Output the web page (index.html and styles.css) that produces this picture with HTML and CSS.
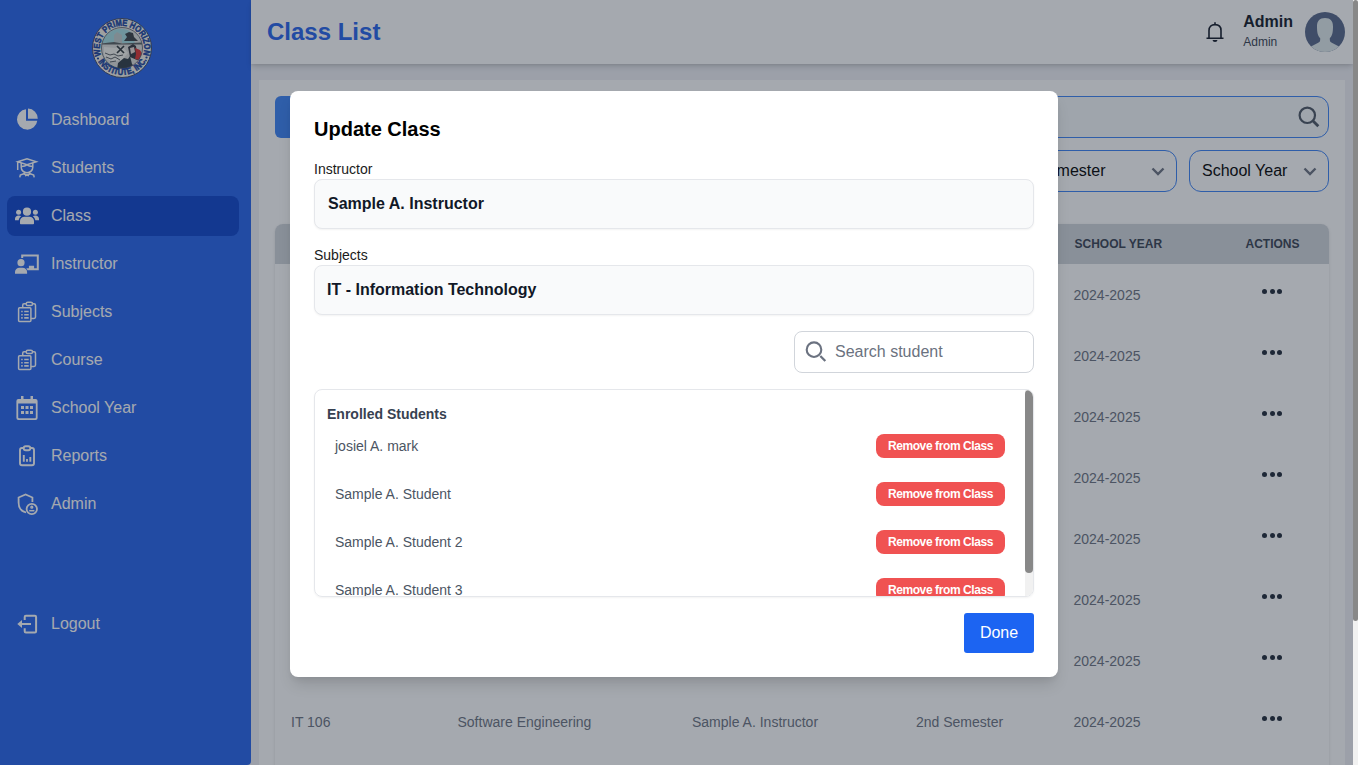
FILE: index.html
```html
<!DOCTYPE html>
<html lang="en">
<head>
<meta charset="utf-8">
<title>Class List</title>
<link rel="stylesheet" href="styles.css">
</head>
<body>
<div class="window">
<div class="app">
  <aside class="sidebar">
    <svg class="logo" viewBox="0 0 60 60">
      <defs>
        <path id="arc-top" d="M9.600 38.500A22.100 22.100 0 1 1 50.400 38.500"/>
        <path id="arc-bottom" d="M3.200 37.500A28.200 28.200 0 0 0 56.800 37.500"/>
        <clipPath id="seal"><circle cx="30" cy="30" r="20.500"/></clipPath>
      </defs>
      <circle cx="30" cy="30" r="29.500" fill="#f3f1e7" stroke="#404a68"/>
      <g clip-path="url(#seal)">
        <rect width="60" height="60" fill="#dededb"/>
        <path d="M8 25C15 12 29 7 39 14L43 25Z" fill="#a6dce2"/>
        <path d="M32 23l3-4-2-3 4-2 4 1 1 4 4 4z" fill="#393f43"/>
        <path d="M22 17l3-3 5 3v8h-8z" fill="#c0cccb"/>
        <path d="M9 25.500l13-1.500 8 1.500 20-1v2H9z" fill="#596062"/>
        <path d="M12 29l11 1 8-1 5 6-6 7-10 2-8-6z" fill="#f4f3ef"/>
        <path d="M13 35l5 2 4-1 4 2 5-1M14 39l5 2 4-2 5 3M18 44l6-1" stroke="#555b60" fill="none"/>
        <path d="M25 28l7 7M32 28l-7 7" stroke="#30383c" stroke-width="1.700"/>
        <path d="M36 29l5-3 3 2 1 8 5 5-5 1-7-3z" fill="#34363e"/>
        <path d="M43 30l5 2 3 5-3 5-5-1 1-5z" fill="#df302f"/>
        <path d="M38 30l4-1 1 5-4 2z" fill="#ead9d2"/>
        <path d="M26 45l6-5 4 1 2-3 2 8 6 6H25z" fill="#303b45"/>
      </g>
      <circle cx="30" cy="30" r="20.500" fill="none" stroke="#505866" stroke-width=".8"/>
      <circle cx="6" cy="40.500" r="1.100" fill="#163f9c"/><circle cx="54.500" cy="39.500" r="1.100" fill="#163f9c"/>
      <text class="seal-text"><textPath href="#arc-top" textLength="84" lengthAdjust="spacingAndGlyphs" startOffset="1">WEST PRIME HORIZON</textPath></text>
      <text class="seal-text"><textPath href="#arc-bottom" startOffset="6.500" textLength="59" lengthAdjust="spacingAndGlyphs">INSTITUTE, INC.</textPath></text>
    </svg>
    <nav class="nav">
      <a class="nav-item"><svg viewBox="0 0 24 24" fill="currentColor"><path d="M11 1.300V12.800h11.300A10.200 10.200 0 1 1 11 1.300Z"/><path d="M13 .600a10 10 0 0 1 9.800 10.200H13Z"/></svg>Dashboard</a>
      <a class="nav-item"><svg viewBox="0 0 24 24" fill="none" stroke="currentColor" stroke-width="1.500"><path d="M2.700 5.800 12 2.700l9.300 3.100L12 8.800ZM2.700 6v8M6.200 7.500v3.700c0 3 2.600 5.600 5.800 5.600s5.800-2.600 5.800-5.600V7.500M6.500 10.500C9 10.200 10.500 9.800 12 8.800c1.500 1 3 1.400 5.500 1.700M9.500 16.200v1.300l-4.200 1.600-.5 2.200M14.500 16.200v1.300l4.200 1.600.5 2.200M9 18l5 1.800M15 18l-5 1.800"/></svg>Students</a>
      <a class="nav-item active"><svg viewBox="0 0 24 24" fill="currentColor"><circle cx="12" cy="7.700" r="4.100"/><circle cx="3.600" cy="8.300" r="2.500"/><circle cx="20.400" cy="8.300" r="2.500"/><path d="M5 19.500v-2.400c0-2.600 2-4.300 4.500-4.300h5c2.500 0 4.500 1.700 4.500 4.300v2.400q0 .8-.8.8H5.800Q5 20.300 5 19.500ZM0 16.300v-1.500c0-1.900 1.600-3.300 3.600-3.300 1 0 1.900.2 2.600.8-1.300.9-2.300 2.100-2.500 4H0ZM24 16.300v-1.500c0-1.900-1.600-3.300-3.600-3.300-1 0-1.900.2-2.600.8 1.300.9 2.300 2.100 2.500 4H24Z"/></svg>Class</a>
      <a class="nav-item"><svg viewBox="0 0 24 24" fill="currentColor"><path d="M6.200 6V2.400h17.600v15.800H12.500l-1.200-2h2.600v-2.400h5.200v2.400h2.700V4.400H8.200V6Z"/><circle cx="6" cy="10.700" r="3.600"/><path d="M0 21.800v-1.700c0-2.700 2-4.400 4.500-4.400h3c2.600 0 4.600 1.700 4.600 4.400v1.700Z"/></svg>Instructor</a>
      <a class="nav-item"><svg viewBox="0 0 24 24" fill="none" stroke="currentColor" stroke-width="1.500"><rect x="3.600" y="7.800" width="12.300" height="13.700" rx="1"/><path d="M7.700 7.500V5.200q0-1.400 1.400-1.400h2.200M17.400 3.800H19q1.500 0 1.500 1.500v11.800q0 1.400-1.500 1.400h-3"/><rect x="11.200" y="2.200" width="6.300" height="3.300" rx="1.600"/><path d="M6.200 11.500h1.500m1.500 0h4.500M6.200 14.700h1.500m1.500 0h4.500M6.200 17.900h1.500m1.500 0h4.500" stroke-width="1.600"/></svg>Subjects</a>
      <a class="nav-item"><svg viewBox="0 0 24 24" fill="none" stroke="currentColor" stroke-width="1.500"><rect x="3.600" y="7.800" width="12.300" height="13.700" rx="1"/><path d="M7.700 7.500V5.200q0-1.400 1.400-1.400h2.200M17.400 3.800H19q1.500 0 1.500 1.500v11.800q0 1.400-1.500 1.400h-3"/><rect x="11.200" y="2.200" width="6.300" height="3.300" rx="1.600"/><path d="M6.200 11.500h1.500m1.500 0h4.500M6.200 14.700h1.500m1.500 0h4.500M6.200 17.900h1.500m1.500 0h4.500" stroke-width="1.600"/></svg>Course</a>
      <a class="nav-item"><svg viewBox="0 0 24 24"><path fill="currentColor" fill-rule="evenodd" d="M6 0h2.500v3h7V0H18v3h2.500Q22.600 3 22.600 5v17q0 2-2 2H3.400q-2 0-2-2V5q0-2 2-2H6ZM3.200 7.500v14q0 .8.800.8h16q.8 0 .8-.8v-14ZM6 10h3v3H6Zm4.500 0h3v3h-3Zm4.500 0h3v3h-3Zm-9 5h3v3H6Zm4.500 0h3v3h-3Zm4.500 0h3v3h-3Z"/></svg>School Year</a>
      <a class="nav-item"><svg viewBox="0 0 24 24" fill="none" stroke="currentColor" stroke-width="1.900" stroke-linejoin="round"><path d="M8.500 4h-1.500q-2 0-2 2v13.200q0 2 2 2h10q2 0 2-2V6q0-2-2-2h-1.500"/><rect x="8.700" y="2.200" width="6.600" height="4" rx="2"/><path d="M8.800 11v6.700M12 15v2.700M15.300 13v4.700"/></svg>Reports</a>
      <a class="nav-item"><svg viewBox="0 0 24 24" fill="none" stroke="currentColor" stroke-width="1.800"><path d="M17.400 10V5.500L10.600 2.500 3.600 5.500v5c0 5 3 8.900 7.500 10"/><circle cx="16.800" cy="17" r="5.200"/><circle cx="16.800" cy="15.200" r=".7"/><path d="M14.200 18.700h5.200" stroke-width="1.500"/></svg>Admin</a>
    </nav>
    <a class="nav-item logout"><svg viewBox="0 0 24 24" fill="none" stroke="currentColor" stroke-width="2"><path d="M9.700 8V5q0-1.200 1.200-1.200h9q1.200 0 1.200 1.200v14.200q0 1.200-1.200 1.200h-9q-1.200 0-1.200-1.200v-3M4 12h12"/><path fill="currentColor" stroke="none" d="M2.300 12 7 8v8Z"/></svg>Logout</a>
  </aside>

  <div class="page">
    <header class="topbar">
      <h1>Class List</h1>
      <div class="account">
        <svg class="bell" viewBox="0 0 20 22" fill="none" stroke="currentColor" stroke-width="1.600"><path d="M1.500 17.200h17M4 17V9.500C4 5.700 6.500 3.600 10 3.600s6 2.100 6 5.900V17M10 1.300v2.200"/><path d="M7.500 19h5Q12.200 21 10 21t-2.500-2Z" fill="currentColor" stroke="none"/></svg>
        <div class="who"><strong>Admin</strong><span>Admin</span></div>
        <svg class="avatar" viewBox="0 0 40 40"><defs><clipPath id="disc"><circle cx="20" cy="20" r="20"/></clipPath></defs><g clip-path="url(#disc)"><path fill="#566689" d="M0 0h40v40H0z"/><path fill="#e0e9eb" d="M20 6c5.500 0 8 3 8 8.500 0 6-.8 9.500-3.200 11.700 0 2.600 0 3.600 2 4.600L34 34.500V40H6v-5.500l7.200-3.700c2-1 2-2 2-4.600C12.800 24 12 20.500 12 14.500 12 9 14.500 6 20 6Z"/></g></svg>
      </div>
    </header>
    <main class="panel">
      <div class="tools">
        <div class="add"></div>
        <div class="search"><svg viewBox="0 0 24 24" fill="none" stroke="currentColor" stroke-width="2.200"><circle cx="10.300" cy="10.300" r="7.700"/><path d="m15.800 15.800 5.500 5.500" stroke-width="2.800"/></svg></div>
      </div>
      <div class="filters">
        <div class="select semester">Semester<svg viewBox="0 0 20 20"><path d="m4.500 7.500 5.500 5.500 5.500-5.500"/></svg></div>
        <div class="select year">School Year<svg viewBox="0 0 20 20"><path d="m4.500 7.500 5.500 5.500 5.500-5.500"/></svg></div>
      </div>
      <div class="table">
        <div class="row head"><span></span><span></span><span></span><span></span><span>SCHOOL YEAR</span><span class="act">ACTIONS</span></div>
        <div class="row"><span></span><span></span><span></span><span></span><span>2024-2025</span><span class="act"><i></i><i></i><i></i></span></div>
        <div class="row"><span></span><span></span><span></span><span></span><span>2024-2025</span><span class="act"><i></i><i></i><i></i></span></div>
        <div class="row"><span></span><span></span><span></span><span></span><span>2024-2025</span><span class="act"><i></i><i></i><i></i></span></div>
        <div class="row"><span></span><span></span><span></span><span></span><span>2024-2025</span><span class="act"><i></i><i></i><i></i></span></div>
        <div class="row"><span></span><span></span><span></span><span></span><span>2024-2025</span><span class="act"><i></i><i></i><i></i></span></div>
        <div class="row"><span></span><span></span><span></span><span></span><span>2024-2025</span><span class="act"><i></i><i></i><i></i></span></div>
        <div class="row"><span></span><span></span><span></span><span></span><span>2024-2025</span><span class="act"><i></i><i></i><i></i></span></div>
        <div class="row"><span>IT 106</span><span>Software Engineering</span><span>Sample A. Instructor</span><span>2nd Semester</span><span>2024-2025</span><span class="act"><i></i><i></i><i></i></span></div>
      </div>
    </main>
  </div>

  <div class="overlay">
    <section class="modal">
      <h2>Update Class</h2>
      <label>Instructor</label>
      <div class="field instructor">Sample A. Instructor</div>
      <label>Subjects</label>
      <div class="field">IT - Information Technology</div>
      <div class="student-search"><svg viewBox="0 0 24 24" fill="none" stroke="currentColor" stroke-width="2.100"><circle cx="10" cy="9.700" r="7.300"/><path d="m16.300 16 5 5" stroke-width="2.300"/></svg>Search student</div>
      <div class="enrolled">
        <div class="students">
          <h3>Enrolled Students</h3>
          <div class="student"><span>josiel A. mark</span><button>Remove from Class</button></div>
          <div class="student"><span>Sample A. Student</span><button>Remove from Class</button></div>
          <div class="student"><span>Sample A. Student 2</span><button>Remove from Class</button></div>
          <div class="student"><span>Sample A. Student 3</span><button>Remove from Class</button></div>
        </div>
        <div class="track"><div class="thumb"></div></div>
      </div>
      <button class="done">Done</button>
    </section>
  </div>
</div>
<div class="page-track"><div class="page-thumb"></div></div>
</div>
</body>
</html>
```

FILE: styles.css
```css
* { box-sizing: border-box; }
body { margin: 0; font: 16px/24px "Liberation Sans", Arial, sans-serif; overflow: hidden; color: #111827; }
h1, h2, h3 { margin: 0; }
button { border: 0; font-family: inherit; }
.window { display: flex; height: 765px; overflow: hidden; background: #f1f1f1; }
.app { position: relative; display: flex; width: 1353px; height: 765px; overflow: hidden; background: #f0f1f6; }
.page-track { width: 5px; background: #f1f1f1; }
.page-thumb { height: 621px; background: #888; border-radius: 3px; }

.sidebar { width: 251px; flex: none; display: flex; flex-direction: column; background: #2563eb; border-bottom-right-radius: 4px; padding: 18px 12px 0 7px; color: #fff; }
.logo { width: 60px; height: 60px; margin: 0 0 22px 85px; flex: none; }
.seal-text { font-size: 9px; font-weight: bold; fill: #163f9c; stroke: #163f9c; stroke-width: .5; }
.nav { display: flex; flex-direction: column; gap: 8px; }
.nav-item { height: 40px; display: flex; align-items: center; gap: 12px; padding: 0 8px; border-radius: 8px; }
.nav-item svg { width: 24px; height: 24px; }
.nav-item.active { background: #0c43cc; }
.logout { margin-top: 80px; }

.page { width: 1102px; flex: none; display: flex; flex-direction: column; gap: 16px; }
.topbar { height: 64px; flex: none; display: flex; justify-content: space-between; align-items: center; padding: 0 8px 0 16px; background: #fff; box-shadow: 0 4px 6px -1px rgba(0,0,0,.13), 0 1px 3px rgba(0,0,0,.1); }
.topbar h1 { font-size: 24px; line-height: 32px; color: #2563eb; }
.account { display: flex; align-items: center; color: #111827; }
.bell { width: 20px; height: 22px; margin-right: 18px; }
.who { display: flex; flex-direction: column; margin: 0 12px 2px 0; }
.who strong { line-height: 22px; }
.who span { font-size: 12px; line-height: 18px; color: #374151; }
.avatar { width: 40px; height: 40px; }

.panel { height: 800px; flex: none; margin: 0 8px; padding: 16px; background: #fff; }
.tools { display: flex; gap: 12px; }
.add { width: 140px; height: 42px; background: #3b82f6; border-radius: 6px; }
.search { flex: 1; height: 42px; display: flex; justify-content: flex-end; align-items: center; padding-right: 7px; border: 1px solid #3b82f6; border-radius: 12px; background: #f6f8fa; color: #4b5563; }
.search svg { width: 24px; height: 24px; }
.filters { display: flex; justify-content: flex-end; gap: 12px; margin-top: 12px; }
.select { height: 42px; display: flex; justify-content: space-between; align-items: center; padding: 0 8px 0 12px; border: 1px solid #3b82f6; border-radius: 12px; color: #000; }
.semester { width: 153px; }
.year { width: 140px; }
.select svg { width: 20px; height: 20px; fill: none; stroke: #6b7280; stroke-width: 2.400; }
.table { height: 560px; margin-top: 32px; border-radius: 8px; overflow: hidden; box-shadow: 0 1px 3px rgba(0,0,0,.12); }
.row { height: 61px; display: grid; grid-template-columns: 166.500px 234.500px 224px 157.500px 141px 115px; align-items: center; padding-left: 16px; font-size: 14px; color: #6b7280; }
.row.head { height: 40px; font-size: 12px; font-weight: bold; color: #374151; background: #d1d5db; }
.head span { padding-left: 1px; }
.act { display: flex; justify-content: center; gap: 2.500px; }
.row:not(.head) .act { padding-bottom: 6px; }
.act i { width: 5px; height: 5px; border-radius: 50%; background: #1f2937; }

.overlay { position: absolute; inset: 0; display: flex; justify-content: center; align-items: flex-start; padding: 91px 5px 0 0; background: rgba(31,41,55,.4); }
.modal { width: 768px; height: 586px; display: flex; flex-direction: column; padding: 24px; background: #fff; border-radius: 8px; box-shadow: 0 10px 15px -3px rgba(0,0,0,.13), 0 4px 6px -2px rgba(0,0,0,.06); }
.modal h2 { font-size: 20px; line-height: 28px; margin-bottom: 16px; color: #000; }
.modal label { font-size: 14px; line-height: 20px; color: #1a1a1a; }
.field { height: 50px; display: flex; align-items: center; padding: 0 12px; margin-bottom: 16px; border: 1px solid #e5e7eb; border-radius: 8px; background: #f9fafb; font-weight: bold; box-shadow: 0 1px 2px rgba(0,0,0,.05); }
.instructor { padding-left: 13px; }
.student-search { width: 240px; height: 42px; flex: none; align-self: flex-end; display: flex; align-items: center; gap: 7px; padding: 0 9px; border: 1px solid #d1d5db; border-radius: 8px; color: #6b7280; }
.student-search svg { width: 24px; height: 24px; }
.enrolled { height: 208px; flex: none; display: flex; margin: 16px 0; border: 1px solid #e5e7eb; border-radius: 8px; overflow: hidden; box-shadow: 0 1px 2px rgba(0,0,0,.05); }
.students { flex: 1; padding: 14px 12px 0; }
.students h3 { font-size: 14px; line-height: 20px; color: #374151; }
.student { height: 48px; display: flex; justify-content: space-between; padding: 10px 8px; font-size: 14px; line-height: 24px; color: #4b5563; }
.student button { width: 129px; height: 24px; padding: 0; border-radius: 8px; background: #f05252; color: #fff; font-size: 12px; font-weight: bold; letter-spacing: -.4px; }
.track { width: 8px; background: #f1f1f1; }
.thumb { height: 183px; background: #888; border-radius: 4px; }
.done { width: 70px; height: 40px; align-self: flex-end; padding: 0; border-radius: 3px; background: #1c64f2; color: #fff; font-size: 16px; }
```
